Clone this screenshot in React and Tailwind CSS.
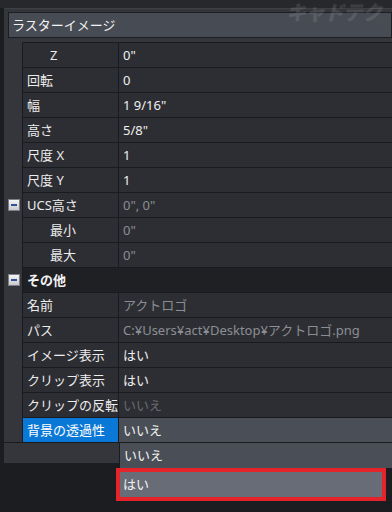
import React from "react";

const rows = [
  { name: "Z", indent: true, value: '0"' },
  { name: "回転", value: "0" },
  { name: "幅", value: '1 9/16"' },
  { name: "高さ", value: '5/8"' },
  { name: "尺度 X", value: "1" },
  { name: "尺度 Y", value: "1" },
  { name: "UCS高さ", value: '0", 0"', tone: "dim", toggle: true },
  { name: "最小", indent: true, value: '0"', tone: "dim" },
  { name: "最大", indent: true, value: '0"', tone: "dim" },
  { category: "その他", toggle: true },
  { name: "名前", value: "アクトロゴ", tone: "dim" },
  { name: "パス", value: "C:¥Users¥act¥Desktop¥アクトロゴ.png", tone: "dim" },
  { name: "イメージ表示", value: "はい" },
  { name: "クリップ表示", value: "はい" },
  { name: "クリップの反転", value: "いいえ", tone: "faint" },
  { name: "背景の透過性", value: "いいえ", selected: true },
];

function Toggle() {
  return (
    <div className="w-[12px] h-[12px] border border-[#7d7f84] bg-gradient-to-b from-[#f4f4f4] to-[#c9cacd] flex items-center justify-center">
      <div className="w-[6px] h-[2px] bg-[#34509a]" />
    </div>
  );
}

function Row({ row }) {
  if (row.category) {
    return (
      <div className="flex h-[25px]">
        <div className="w-[18px] flex items-center justify-center pl-[1px]">
          <Toggle />
        </div>
        <div className="flex-1 flex items-center border-t border-l border-[#1a1b1f] bg-[#1f2024] pl-[4px] font-bold text-[#f2f2f2]">
          {row.category}
        </div>
      </div>
    );
  }
  const valueColor =
    row.tone === "dim"
      ? "text-[#8b8e94]"
      : row.tone === "faint"
      ? "text-[#686b71]"
      : "text-[#f0f0f0]";
  return (
    <div className="flex h-[25px]">
      <div className="w-[18px] flex items-center justify-center pl-[1px]">
        {row.toggle && <Toggle />}
      </div>
      <div
        className={`w-[96px] flex items-center border-t border-l border-[#1a1b1f] whitespace-nowrap ${
          row.selected ? "bg-[#0a78d7] text-white" : "bg-[#2d2e33] text-[#ececec]"
        } ${row.indent ? "pl-[27px]" : "pl-[4px]"}`}
      >
        {row.name}
      </div>
      <div
        className={`flex-1 flex items-center border-t border-l border-[#1a1b1f] pl-[4px] whitespace-nowrap ${
          row.selected ? "bg-[#4a4f57] text-[#f2f2f2]" : `bg-[#2d2e33] ${valueColor}`
        }`}
      >
        {row.value}
      </div>
    </div>
  );
}

export default function App() {
  return (
    <div
      className="relative w-[392px] h-[512px] overflow-hidden bg-[#1c1d21] text-[13px] leading-none"
      style={{ fontFamily: '"Noto Sans", "Noto Sans CJK JP", sans-serif' }}
    >
      <div className="h-[8px] bg-[#27282c]" />
      <div className="ml-[4px] h-[455px] bg-[#34363b] border-t border-[#3e4045] pt-[3px]">
        <div className="ml-[4px] h-[26px] bg-[#474c54] border border-[#1c1e22] flex items-center pl-[3px] text-[#f2f2f2]">
          ラスターイメージ
        </div>
        <div className="mt-[4px] border-b border-[#1a1b1f]">
          {rows.map((row, i) => (
            <Row key={i} row={row} />
          ))}
        </div>
      </div>

      {/* open dropdown list */}
      <div className="absolute left-[119px] top-[443px] w-[273px]">
        <div className="h-[25px] bg-[#4a4f57] border-l border-[#1a1b1f] flex items-center pl-[4px] text-[#f2f2f2]">
          いいえ
        </div>
      </div>

      {/* red highlight box */}
      <div className="absolute left-[116px] top-[468px] w-[270px] h-[33px] border-[4px] border-[#e5232b] bg-[#1c1d21]">
        <div className="h-full bg-[#676c76] flex items-center pl-[3px] text-[#f4f4f4]">
          はい
        </div>
      </div>

      {/* watermark */}
      <div className="absolute left-[286px] top-[3px] text-[20px] font-black italic tracking-tighter text-white/10 pointer-events-none whitespace-nowrap">
        キャドテク
      </div>
    </div>
  );
}
